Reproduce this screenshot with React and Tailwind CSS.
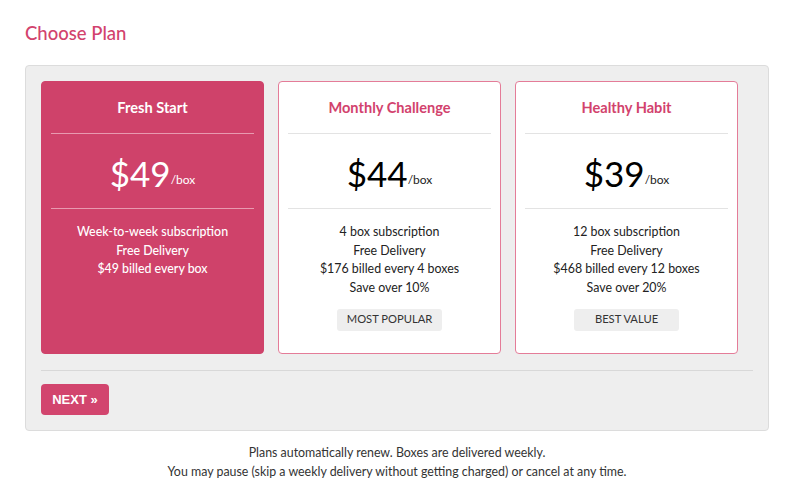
import React from 'react';

const plans = [
  {
    name: 'Fresh Start',
    price: '$49',
    lines: ['Week-to-week subscription', 'Free Delivery', '$49 billed every box'],
    selected: true,
  },
  {
    name: 'Monthly Challenge',
    price: '$44',
    lines: ['4 box subscription', 'Free Delivery', '$176 billed every 4 boxes', 'Save over 10%'],
    badge: 'MOST POPULAR',
  },
  {
    name: 'Healthy Habit',
    price: '$39',
    lines: ['12 box subscription', 'Free Delivery', '$468 billed every 12 boxes', 'Save over 20%'],
    badge: 'BEST VALUE',
  },
];

function PlanCard({ plan }) {
  const sel = plan.selected;
  return (
    <div
      className={
        'w-[223px] h-[273px] rounded-[4px] border px-[9px] ' +
        (sel ? 'bg-[#cf426a] border-[#cf426a] text-white' : 'bg-white border-[#e47c98] text-[#222]')
      }
    >
      {/* header */}
      <div
        className={
          'h-[52px] flex items-center justify-center border-b ' +
          (sel ? 'border-[#e89ab0]' : 'border-[#e3e3e3]')
        }
      >
        <h3 className={'text-[14.6px] font-bold ' + (sel ? 'text-white' : 'text-[#d2426d]')}>{plan.name}</h3>
      </div>

      {/* price */}
      <div
        className={
          'h-[75px] flex items-center justify-center border-b pt-[4px] ' +
          (sel ? 'border-[#e89ab0]' : 'border-[#e3e3e3]')
        }
      >
        <span className={'text-[35px] leading-none ' + (sel ? 'text-white' : 'text-black')}>{plan.price}</span>
        <span className="text-[12px] self-end mb-[19px]">/box</span>
      </div>

      {/* features */}
      <div className="pt-[14px] flex flex-col items-center">
        {plan.lines.map((l) => (
          <p key={l} className={'text-[12.4px] leading-[18.7px] ' + (sel ? 'font-medium' : '')}>{l}</p>
        ))}
        {plan.badge && (
          <span className="mt-[11px] h-[22px] w-[105px] flex items-center justify-center bg-[#eeeeee] rounded-[3px] text-[11.2px] text-[#333]">
            {plan.badge}
          </span>
        )}
      </div>
    </div>
  );
}

export default function App() {
  return (
    <div className="min-h-screen bg-white font-['Lato','Open_Sans',sans-serif] px-[25px] pt-[21px]">
      <h1 className="text-[18.5px] leading-[24px] text-[#d2426d] font-medium">Choose Plan</h1>

      <div className="mt-[20px] w-[744px] bg-[#eeeeee] border border-[#dcdcdc] rounded-[4px] pt-[15px] px-[15px] pb-[15px]">
        <div className="flex gap-[14px]">
          {plans.map((p) => (
            <PlanCard key={p.name} plan={p} />
          ))}
        </div>

        <div className="mt-[16px] border-t border-[#d8d8d8]" />

        <button className="mt-[13px] h-[31px] w-[68px] rounded-[4px] bg-[#d2456e] text-white text-[13px] font-bold font-['Liberation_Sans',Arial,sans-serif] flex items-center justify-center">
          NEXT »
        </button>
      </div>

      <div className="w-[744px] mt-[13px] text-center text-[12.4px] leading-[18.5px] text-[#333]">
        <p>Plans automatically renew. Boxes are delivered weekly.</p>
        <p>You may pause (skip a weekly delivery without getting charged) or cancel at any time.</p>
      </div>
    </div>
  );
}
